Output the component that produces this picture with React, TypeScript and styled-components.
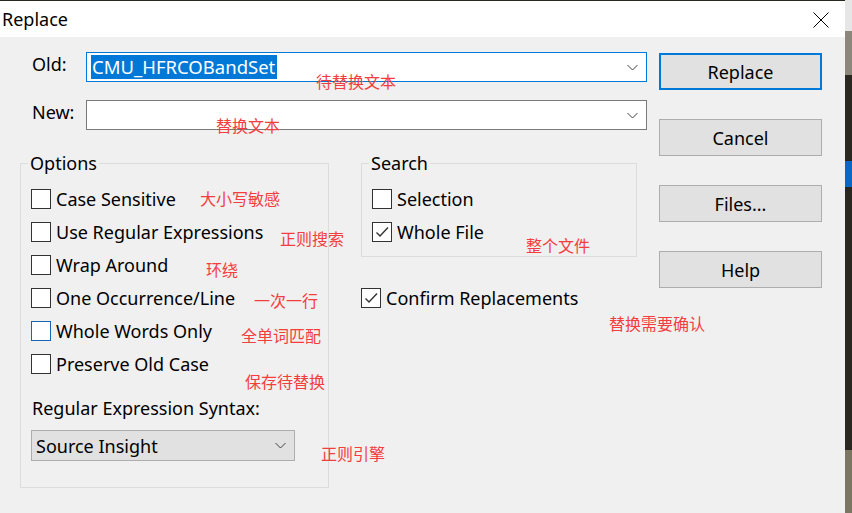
import React from "react";
import styled, { createGlobalStyle } from "styled-components";

const GlobalStyle = createGlobalStyle`
  html, body {
    margin: 0;
    padding: 0;
    background: #2a2620;
    overflow: hidden;
  }
  * {
    box-sizing: border-box;
  }
`;

const UI_FONT = `"Noto Sans", "Liberation Sans", sans-serif`;
const CJK_FONT = `"Noto Sans CJK SC", "Noto Sans", sans-serif`;

const Page = styled.div`
  display: flex;
  width: 852px;
  height: 513px;
  padding-top: 1px;
  font-family: ${UI_FONT};
`;

const Dialog = styled.div`
  position: relative;
  width: 845px;
  height: 512px;
  background: #f0f0f0;
  color: #000;
`;

const TitleBar = styled.div`
  display: flex;
  align-items: center;
  justify-content: space-between;
  height: 36px;
  background: #fff;
  padding: 0 16px 0 2px;
`;

const Title = styled.span`
  font-size: 18px;
  line-height: 24px;
  margin-top: -1px;
`;

const CloseIcon = styled.svg`
  width: 16px;
  height: 16px;
  margin-top: 1px;
`;

const Body = styled.div`
  display: flex;
  padding: 15px 0 0 20px;
`;

const Main = styled.div`
  width: 627px;
`;

const FieldRow = styled.div`
  display: flex;
  align-items: flex-start;
  & + & {
    margin-top: 18px;
  }
`;

const FieldLabel = styled.span`
  width: 66px;
  padding-left: 12px;
  font-size: 18px;
  line-height: 24px;
`;

const Combo = styled.div<{ $focused?: boolean }>`
  display: flex;
  align-items: center;
  justify-content: space-between;
  width: 561px;
  height: 30px;
  background: #fff;
  border: 1px solid ${({ $focused }) => ($focused ? "#0078d7" : "#7a7a7a")};
  padding: 0 8px 0 3px;
`;

const Selected = styled.span`
  background: #0078d7;
  color: #fff;
  font-size: 18.5px;
  line-height: 24px;
  margin-left: 1px;
  padding: 0 2px 0 1px;
`;

const Chevron = styled.svg`
  width: 11px;
  height: 7px;
  margin-left: auto;
`;

const Groups = styled.div`
  display: flex;
  gap: 32px;
  margin-top: 21px;
`;

const Group = styled.fieldset<{ $width: number }>`
  width: ${({ $width }) => $width}px;
  margin: 0;
  padding: 7px 10px 8px;
  border: 1px solid #dcdcdc;
  min-width: 0;
`;

const Legend = styled.legend`
  font-size: 18px;
  line-height: 24px;
  padding: 0 2px;
  margin-left: -3px;
`;

const RightCol = styled.div`
  display: flex;
  flex-direction: column;
`;

const CheckRow = styled.div<{ $gapTop?: number }>`
  display: flex;
  align-items: center;
  height: 33px;
  gap: 5px;
  margin-top: ${({ $gapTop }) => $gapTop ?? 0}px;
  font-size: 18px;
`;

const Box = styled.span<{ $hover?: boolean }>`
  display: flex;
  align-items: center;
  justify-content: center;
  width: 20px;
  height: 20px;
  flex: none;
  background: #fff;
  border: 1px solid ${({ $hover }) => ($hover ? "#1a64b4" : "#333")};
`;

const SyntaxLabel = styled.div`
  margin-top: 16px;
  font-size: 18px;
  line-height: 24px;
  padding-left: 1px;
`;

const Select = styled.div`
  display: flex;
  align-items: center;
  width: 264px;
  height: 31px;
  margin-top: 10px;
  margin-bottom: 18px;
  padding: 0 8px 0 4px;
  background: #e1e1e1;
  border: 1px solid #adadad;
  font-size: 18px;
`;

const Buttons = styled.div`
  display: flex;
  flex-direction: column;
  gap: 29px;
  width: 163px;
  margin: 1px 0 0 12px;
`;

const Button = styled.button<{ $default?: boolean }>`
  height: 37px;
  background: #e1e1e1;
  border: ${({ $default }) => ($default ? "2px solid #0078d7" : "1px solid #adadad")};
  font-family: ${UI_FONT};
  font-size: 18px;
  color: #000;
  padding: 0;
`;

const Note = styled.span<{ $x: number; $y: number }>`
  position: absolute;
  left: ${({ $x }) => $x}px;
  top: ${({ $y }) => $y}px;
  font-family: ${CJK_FONT};
  font-size: 16px;
  line-height: 18px;
  color: #f43d3d;
  white-space: nowrap;
`;

const Strip = styled.div`
  display: flex;
  flex-direction: column;
  width: 7px;
  margin-top: -1px;
`;

const StripPart = styled.div<{ $h: number; $c: string }>`
  height: ${({ $h }) => $h}px;
  background: ${({ $c }) => $c};
  flex: none;
`;

const ChevronDown = () => (
  <Chevron viewBox="0 0 11 7">
    <path d="M0.5 1 L5.5 6 L10.5 1" fill="none" stroke="#404040" strokeWidth="1" />
  </Chevron>
);

const Check = () => (
  <svg width="16" height="16" viewBox="0 0 16 16">
    <path d="M2.5 8.5 L6 12 L14 3.5" fill="none" stroke="#333" strokeWidth="1.4" />
  </svg>
);

type CheckProps = { label: string; checked?: boolean; hover?: boolean; gapTop?: number };

const CheckItem: React.FC<CheckProps> = ({ label, checked, hover, gapTop }) => (
  <CheckRow $gapTop={gapTop}>
    <Box $hover={hover}>{checked && <Check />}</Box>
    <span>{label}</span>
  </CheckRow>
);

const options = [
  "Case Sensitive",
  "Use Regular Expressions",
  "Wrap Around",
  "One Occurrence/Line",
  "Whole Words Only",
  "Preserve Old Case",
];

const notes: { text: string; x: number; y: number }[] = [
  { text: "待替换文本", x: 316, y: 71 },
  { text: "替换文本", x: 216, y: 115 },
  { text: "大小写敏感", x: 200, y: 188 },
  { text: "正则搜索", x: 280, y: 228 },
  { text: "环绕", x: 206, y: 259 },
  { text: "一次一行", x: 254, y: 290 },
  { text: "全单词匹配", x: 241, y: 325 },
  { text: "保存待替换", x: 245, y: 371 },
  { text: "正则引擎", x: 321, y: 443 },
  { text: "整个文件", x: 526, y: 235 },
  { text: "替换需要确认", x: 609, y: 313 },
];

export default function App() {
  return (
    <>
      <GlobalStyle />
      <Page>
        <Dialog>
          <TitleBar>
            <Title>Replace</Title>
            <CloseIcon viewBox="0 0 16 16">
              <path d="M0.5 0.5 L15.5 15.5 M15.5 0.5 L0.5 15.5" stroke="#000" strokeWidth="1" />
            </CloseIcon>
          </TitleBar>
          <Body>
            <Main>
              <FieldRow>
                <FieldLabel>Old:</FieldLabel>
                <Combo $focused>
                  <Selected>CMU_HFRCOBandSet</Selected>
                  <ChevronDown />
                </Combo>
              </FieldRow>
              <FieldRow>
                <FieldLabel>New:</FieldLabel>
                <Combo>
                  <ChevronDown />
                </Combo>
              </FieldRow>
              <Groups>
                <Group $width={309}>
                  <Legend>Options</Legend>
                  {options.map((o) => (
                    <CheckItem key={o} label={o} hover={o === "Whole Words Only"} />
                  ))}
                  <SyntaxLabel>Regular Expression Syntax:</SyntaxLabel>
                  <Select>
                    <span>Source Insight</span>
                    <ChevronDown />
                  </Select>
                </Group>
                <RightCol>
                  <Group $width={276}>
                    <Legend>Search</Legend>
                    <CheckItem label="Selection" />
                    <CheckItem label="Whole File" checked />
                  </Group>
                  <CheckItem label="Confirm Replacements" checked gapTop={24} />
                </RightCol>
              </Groups>
            </Main>
            <Buttons>
              <Button $default>Replace</Button>
              <Button>Cancel</Button>
              <Button>Files...</Button>
              <Button>Help</Button>
            </Buttons>
          </Body>
          {notes.map((n) => (
            <Note key={n.text + n.x} $x={n.x} $y={n.y}>
              {n.text}
            </Note>
          ))}
        </Dialog>
        <Strip>
          <StripPart $h={31} $c="#e6e6e6" />
          <StripPart $h={44} $c="#8c877b" />
          <StripPart $h={86} $c="#2a2620" />
          <StripPart $h={26} $c="#0a68c4" />
          <StripPart $h={263} $c="#2a2620" />
          <StripPart $h={63} $c="#7b7662" />
        </Strip>
      </Page>
    </>
  );
}
